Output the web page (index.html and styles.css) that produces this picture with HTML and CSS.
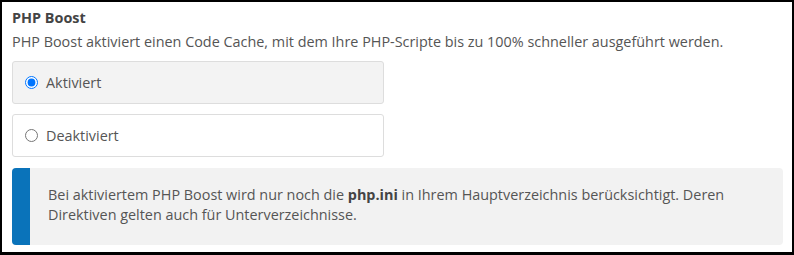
FILE: index.html
```html
<!DOCTYPE html>
<html lang="de">
<head>
<meta charset="utf-8">
<link rel="stylesheet" href="styles.css">
</head>
<body>
<div class="frame">
  <div class="title">PHP Boost</div>
  <div class="desc">PHP Boost aktiviert einen Code Cache, mit dem Ihre PHP-Scripte bis zu 100% schneller ausgeführt werden.</div>
  <div class="options">
    <label class="option selected"><input type="radio" name="boost" checked> <span>Aktiviert</span></label>
    <label class="option"><input type="radio" name="boost"> <span>Deaktiviert</span></label>
  </div>
  <div class="info">
    <div class="info-bar"></div>
    <div class="info-text">Bei aktiviertem PHP Boost wird nur noch die <b>php.ini</b> in Ihrem Hauptverzeichnis berücksichtigt. Deren Direktiven gelten auch für Unterverzeichnisse.</div>
  </div>
</div>
</body>
</html>
```

FILE: styles.css
```css
html, body {
  margin: 0;
  padding: 0;
  background: #fff;
}
.frame {
  box-sizing: border-box;
  width: 794px;
  height: 255px;
  border: 2px solid #000;
  border-bottom-width: 3px;
  padding: 6px 9px 0 10px;
  font-family: "Open Sans", sans-serif;
  font-size: 14.4px;
  line-height: 20px;
  color: #555;
}
.title {
  font-weight: bold;
  color: #444;
}
.desc {
  margin-top: 4px;
}
.options {
  display: flex;
  flex-direction: column;
  gap: 10px;
  margin-top: 9px;
  width: 372px;
}
.option {
  box-sizing: border-box;
  display: flex;
  align-items: center;
  height: 43px;
  padding: 0 12px;
  border: 1px solid #ddd;
  border-radius: 3px;
  background: #fff;
}
.option.selected {
  background: #f3f3f3;
}
.option input {
  margin: 0 8px 0 0;
  width: 13px;
  height: 13px;
}
.info {
  display: flex;
  margin-top: 11px;
  background: #f2f2f2;
  border-radius: 4px;
  overflow: hidden;
}
.info-bar {
  width: 18px;
  flex: none;
  background: #0a73ba;
}
.info-text {
  padding: 17px 20px 20px 18px;
}
.info-text b {
  color: #444;
}
```
